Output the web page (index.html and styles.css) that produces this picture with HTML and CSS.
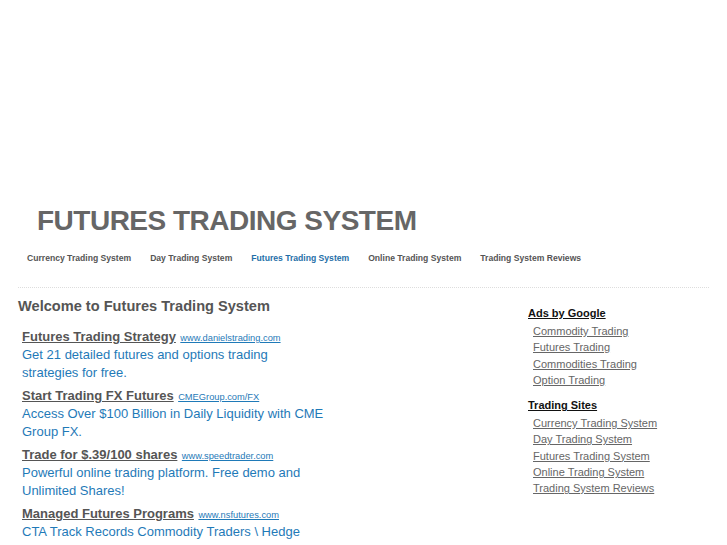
FILE: index.html
```html
<!DOCTYPE html>
<html>
<head>
<meta charset="utf-8">
<link rel="stylesheet" href="styles.css">
</head>
<body>
<div class="banner"></div>
<div class="header">
  <h1 class="title">FUTURES TRADING SYSTEM</h1>
  <ul class="nav">
    <li><a href="#">Currency Trading System</a></li>
    <li><a href="#">Day Trading System</a></li>
    <li><a href="#" class="active">Futures Trading System</a></li>
    <li><a href="#">Online Trading System</a></li>
    <li><a href="#">Trading System Reviews</a></li>
  </ul>
</div>
<div class="rule"></div>
<div class="content">
  <div class="main">
    <h2 class="welcome">Welcome to Futures Trading System</h2>
    <div class="ads">
      <div class="ad">
        <div class="ad-head"><a href="#" class="ad-title">Futures Trading Strategy</a> <a href="#" class="ad-url">www.danielstrading.com</a></div>
        <div class="ad-desc">Get 21 detailed futures and options trading strategies for free.</div>
      </div>
      <div class="ad">
        <div class="ad-head"><a href="#" class="ad-title">Start Trading FX Futures</a> <a href="#" class="ad-url">CMEGroup.com/FX</a></div>
        <div class="ad-desc">Access Over $100 Billion in Daily Liquidity with CME Group FX.</div>
      </div>
      <div class="ad">
        <div class="ad-head"><a href="#" class="ad-title">Trade for $.39/100 shares</a> <a href="#" class="ad-url">www.speedtrader.com</a></div>
        <div class="ad-desc">Powerful online trading platform. Free demo and Unlimited Shares!</div>
      </div>
      <div class="ad">
        <div class="ad-head"><a href="#" class="ad-title">Managed Futures Programs</a> <a href="#" class="ad-url">www.nsfutures.com</a></div>
        <div class="ad-desc">CTA Track Records Commodity Traders \ Hedge funds</div>
      </div>
    </div>
  </div>
  <div class="side">
    <div class="side-head"><a href="#">Ads by Google </a></div>
    <ul class="side-list">
      <li><a href="#">Commodity Trading</a></li>
      <li><a href="#">Futures Trading</a></li>
      <li><a href="#">Commodities Trading</a></li>
      <li><a href="#">Option Trading</a></li>
    </ul>
    <div class="side-head sites"><a href="#">Trading Sites</a></div>
    <ul class="side-list">
      <li><a href="#">Currency Trading System</a></li>
      <li><a href="#">Day Trading System</a></li>
      <li><a href="#">Futures Trading System</a></li>
      <li><a href="#">Online Trading System</a></li>
      <li><a href="#">Trading System Reviews</a></li>
    </ul>
  </div>
</div>
</body>
</html>
```
FILE: styles.css
```css
html, body {
  margin: 0;
  padding: 0;
  background: #fff;
  font-family: "Liberation Sans", Arial, sans-serif;
  overflow: hidden;
  height: 545px;
}
.banner {
  height: 204px;
}
.header {
  padding: 0 0 0 27px;
}
.title {
  margin: 0 0 0 10px;
  font-size: 28px;
  letter-spacing: -0.5px;
  font-weight: bold;
  color: #666;
  line-height: 34px;
}
.nav {
  list-style: none;
  margin: 9px 0 0 0;
  padding: 0;
  display: flex;
  gap: 19px;
}
.nav a {
  font-size: 8.6px;
  font-weight: bold;
  color: #555;
  text-decoration: none;
}
.nav a.active {
  color: #1f6fa8;
}
.rule {
  margin: 22px 18px 0 18px;
  border-top: 1px dotted #ddd;
}
.content {
  display: flex;
  padding: 0 0 0 18px;
}
.main {
  width: 500px;
}
.welcome {
  margin: 9px 0 0 0;
  font-size: 14.6px;
  font-weight: bold;
  color: #555;
  line-height: 18px;
}
.ads {
  padding: 12px 0 0 4px;
  width: 305px;
}
.ad {
  margin-bottom: 5px;
}
.ad-head {
  line-height: 18px;
  height: 18px;
  padding-bottom: 1px;
}
.ad-title {
  font-size: 13px;
  font-weight: bold;
  color: #555;
  text-decoration: underline;
}
.ad-url {
  font-size: 9.3px;
  color: #1f7ab8;
  text-decoration: underline;
}
.ad-desc {
  font-size: 13px;
  color: #1f7ab8;
  line-height: 17.5px;
}
.side {
  padding: 18px 0 0 10px;
}
.side-head {
  font-size: 11px;
  font-weight: bold;
  line-height: 14px;
}
.side-head a {
  color: #111;
  text-decoration: underline;
}
.side-head.sites {
  margin-top: 10px;
}
.side-list {
  list-style: none;
  margin: 3px 0 0 5px;
  padding: 0;
}
.side-list li {
  font-size: 11px;
  line-height: 16.3px;
}
.side-list a {
  color: #666;
  text-decoration: underline;
}
```
